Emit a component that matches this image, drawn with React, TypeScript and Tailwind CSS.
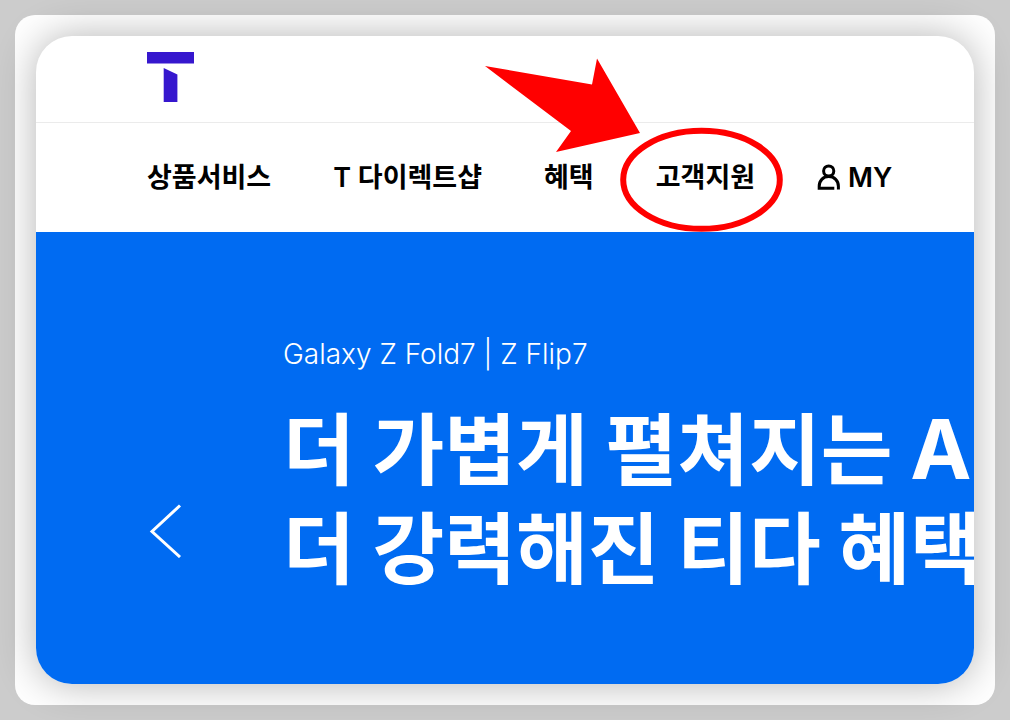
import type { ReactNode } from "react";

function Logo() {
  return (
    <svg viewBox="0 0 47 50" className="h-[50px] w-[47px]" fill="#3617ce" aria-hidden="true">
      <path d="M0 0H47V11.6H0Z" />
      <path d="M16.7 16 30.4 22.4V50H16.7Z" />
    </svg>
  );
}

function UserIcon() {
  return (
    <svg
      viewBox="0 0 24 28"
      className="h-7 w-6"
      fill="none"
      stroke="#000"
      strokeWidth="3"
      aria-hidden="true"
    >
      <circle cx="11.7" cy="7" r="5.1" />
      <path d="M17.3 24.2H2.2V22.3C2.2 16.8 6 12.6 11.7 12.6S21.4 16.8 21.4 22.3V25.6" />
    </svg>
  );
}

function Callout() {
  return (
    <svg
      viewBox="0 0 300 176"
      className="pointer-events-none absolute -right-[29px] top-1/2 h-[176px] w-[300px] -translate-y-[122px]"
      aria-hidden="true"
    >
      <path d="M1 10 108 28.5 113 2.5 156 77 72 96 87 75Z" fill="#ff0000" />
      <ellipse cx="217.5" cy="123.8" rx="78.3" ry="49" fill="none" stroke="#ff0000" strokeWidth="6" />
    </svg>
  );
}

function NavItem({ children }: { children: ReactNode }) {
  return (
    <a href="#" className="relative flex items-center gap-[7px] whitespace-nowrap">
      {children}
    </a>
  );
}

export default function App() {
  return (
    <div className="min-h-screen overflow-hidden bg-[#cccccc] p-[15px] font-['Inter','Noto_Sans_CJK_KR',sans-serif]">
      <div className="rounded-[20px] bg-white p-[21px]">
        <main className="overflow-hidden rounded-[36px] bg-white shadow-[0_0_40px_rgba(0,0,0,0.3)]">
          <header>
            <div className="border-b border-[#ebebeb] pt-4 pb-5 pl-[111px]">
              <a href="#" aria-label="T" className="block w-fit">
                <Logo />
              </a>
            </div>
            <nav className="flex h-[109px] items-center gap-[62px] pl-[111px] text-[27px] leading-10 font-semibold text-black">
              <NavItem>상품서비스</NavItem>
              <NavItem>T 다이렉트샵</NavItem>
              <NavItem>혜택</NavItem>
              <NavItem>
                고객지원
                <Callout />
              </NavItem>
              <NavItem>
                <UserIcon />
                MY
              </NavItem>
            </nav>
          </header>
          <section className="flex bg-[#006bf2] pt-[102px] pb-[90px] pl-[111px] text-white">
            <button type="button" aria-label="이전" className="mt-[170px] mr-[100px] h-[54px] w-9 shrink-0">
              <svg viewBox="0 0 36 54" className="h-[54px] w-9" fill="none" stroke="#fff" strokeWidth="3" aria-hidden="true">
                <path d="M33 1.5 5 27.5 33 53" />
              </svg>
            </button>
            <div className="min-w-0 whitespace-nowrap">
              <p className="text-[28px] leading-10 font-[350]">Galaxy Z Fold7 | Z Flip7</p>
              <h1 className="mt-[22px] font-['Noto_Sans_CJK_KR',sans-serif] text-[78px] leading-[99px] font-bold">
                더 가볍게 펼쳐지는 <span className="font-['Inter',sans-serif] text-[82px] leading-none">A</span>
                <br />
                더 강력해진 티다 혜택
              </h1>
            </div>
          </section>
        </main>
      </div>
    </div>
  );
}
